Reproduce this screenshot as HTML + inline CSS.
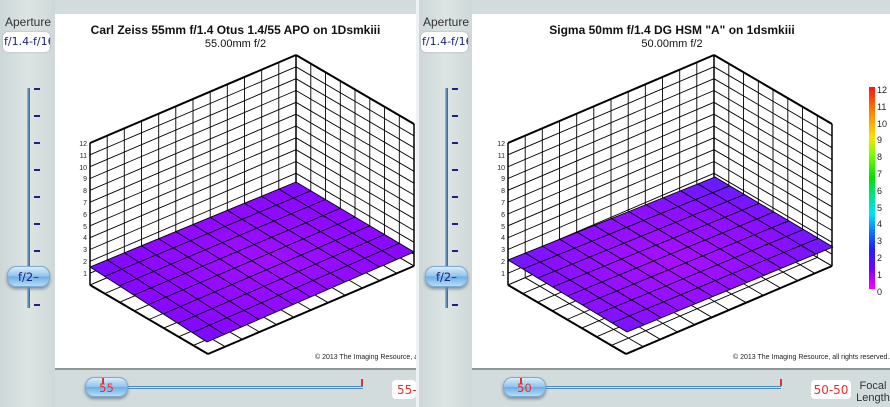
<!DOCTYPE html>
<html><head><meta charset="utf-8">
<style>
*{margin:0;padding:0;box-sizing:border-box}
body{width:890px;height:407px;overflow:hidden;background:#d3dcdc;font-family:"Liberation Sans",sans-serif;position:relative}
.abs{position:absolute}
.side{background:linear-gradient(90deg,#cdd7d7,#dde5e4 50%,#cfd8d8)}
.white{background:#fff;border-bottom:2px solid #8f9696;overflow:hidden}
.ap{font-size:12px;color:#333}
.apbox{background:#fff;border-radius:5px;font-size:11px;color:#1a237e;font-family:"DejaVu Sans",sans-serif;overflow:hidden;white-space:nowrap;padding:3px 0 0 1px;box-shadow:0 0 2px #aab}
.track{width:3px;background:linear-gradient(90deg,#8fbfe0,#2f5f8f);}
.tick{width:6px;height:2px;background:#1a237e}
.thumb{border-radius:9px;background:linear-gradient(#d9ecfb,#8ec3ec 50%,#6aaee6 51%,#b6dcf6);box-shadow:0 2px 3px #7a8a99;border:1px solid #7fa9cc;font-size:11.5px;text-align:center;font-family:"DejaVu Sans",sans-serif}
.htrack{height:3px;border-top:1px solid #4a8ac0;border-bottom:1px solid #4a8ac0;background:#cfe3f3}
.rtick{width:2px;height:7px;background:#e53030}
.vbox{background:#fff;border-radius:4px;color:#e53030;font-size:12px;font-family:"DejaVu Sans",sans-serif;padding-top:3px;text-align:center;overflow:hidden;white-space:nowrap}
.title{font-weight:bold;font-size:12px;color:#111;text-align:center;white-space:nowrap}
.sub{font-size:11px;color:#111;text-align:center;white-space:nowrap}
.copy{font-size:7px;color:#222;white-space:nowrap;position:absolute}
</style></head><body>

<div class="abs side" style="left:0;top:0;width:55px;height:407px"></div>
<div class="abs white" style="left:55px;top:14px;width:361px;height:356px"><div class="copy" style="left:260px;top:340px">© 2013 The Imaging Resource, all rights reserved.</div></div>
<div class="abs" style="left:416px;top:0;width:3px;height:407px;background:#eef2f2"></div>
<div class="abs side" style="left:419px;top:0;width:53px;height:407px"></div>
<div class="abs white" style="left:472px;top:14px;width:418px;height:356px"><div class="copy" style="left:261px;top:340px">© 2013 The Imaging Resource, all rights reserved.</div></div>

<div class="abs ap" style="left:5px;top:15px">Aperture</div>
<div class="abs apbox" style="left:3px;top:32px;width:47px;height:20px">f/1.4-f/16</div>
<div class="abs ap" style="left:423px;top:15px">Aperture</div>
<div class="abs apbox" style="left:421px;top:32px;width:47px;height:20px">f/1.4-f/16</div>

<div class="abs track" style="left:27px;top:88px;height:220px"></div>
<div class="abs track" style="left:445px;top:88px;height:220px"></div>
<div class="abs tick" style="left:34px;top:88px"></div><div class="abs tick" style="left:34px;top:115px"></div><div class="abs tick" style="left:34px;top:142px"></div><div class="abs tick" style="left:34px;top:169px"></div><div class="abs tick" style="left:34px;top:196px"></div><div class="abs tick" style="left:34px;top:223px"></div><div class="abs tick" style="left:34px;top:250px"></div><div class="abs tick" style="left:34px;top:304px"></div>
<div class="abs tick" style="left:452px;top:88px"></div><div class="abs tick" style="left:452px;top:115px"></div><div class="abs tick" style="left:452px;top:142px"></div><div class="abs tick" style="left:452px;top:169px"></div><div class="abs tick" style="left:452px;top:196px"></div><div class="abs tick" style="left:452px;top:223px"></div><div class="abs tick" style="left:452px;top:250px"></div><div class="abs tick" style="left:452px;top:304px"></div>
<div class="abs thumb" style="left:7px;top:266px;width:43px;height:21px;color:#1a237e;padding-top:3px">f/2–</div>
<div class="abs thumb" style="left:425px;top:266px;width:43px;height:21px;color:#1a237e;padding-top:3px">f/2–</div>

<div class="abs htrack" style="left:120px;top:386px;width:243px"></div>
<div class="abs rtick" style="left:361px;top:379px"></div>
<div class="abs thumb" style="left:85px;top:377px;width:43px;height:20px;color:#e53030;padding-top:3px">55</div>
<div class="abs rtick" style="left:102px;top:378px;height:6px"></div>
<div class="abs vbox" style="left:392px;top:380px;width:24px;height:19px;text-align:left;padding-left:5px">55-55</div>

<div class="abs htrack" style="left:538px;top:386px;width:243px"></div>
<div class="abs rtick" style="left:780px;top:379px"></div>
<div class="abs thumb" style="left:503px;top:377px;width:43px;height:20px;color:#e53030;padding-top:3px">50</div>
<div class="abs rtick" style="left:520px;top:378px;height:6px"></div>
<div class="abs vbox" style="left:811px;top:380px;width:40px;height:19px">50-50</div>
<div class="abs" style="left:854px;top:380px;width:38px;font-size:11px;line-height:12px;color:#333;text-align:center">Focal<br>Length</div>

<div class="abs title" style="left:55px;top:23px;width:361px">Carl Zeiss 55mm f/1.4 Otus 1.4/55 APO on 1Dsmkiii</div>
<div class="abs sub" style="left:55px;top:38px;width:361px">55.00mm f/2</div>
<div class="abs title" style="left:472px;top:23px;width:400px">Sigma 50mm f/1.4 DG HSM "A" on 1dsmkiii</div>
<div class="abs sub" style="left:472px;top:38px;width:400px">50.00mm f/2</div>

<div class="abs" style="left:869px;top:87px;width:6px;height:202px;background:linear-gradient(#ff1010,#ff8000 12%,#ffe000 25%,#80ff00 33%,#00e000 45%,#00e0a0 55%,#00e0ff 63%,#1070ff 72%,#2020ff 80%,#7000ff 90%,#ff00ff)"></div>
<div class="abs" style="left:877px;top:82px;font-size:9px;line-height:16.8px;color:#222">12<br>11<br>10<br>9<br>8<br>7<br>6<br>5<br>4<br>3<br>2<br>1<br>0</div>

<svg class="abs" style="left:0;top:0" width="890" height="407" viewBox="0 0 890 407">
<defs>
<radialGradient id="pl" cx="0.55" cy="0.5" r="0.6"><stop offset="0" stop-color="#a010ff"/><stop offset="0.7" stop-color="#8a08ff"/><stop offset="1" stop-color="#6a10ff"/></radialGradient>
<radialGradient id="pr" cx="0.5" cy="0.55" r="0.6"><stop offset="0" stop-color="#a810ff"/><stop offset="0.6" stop-color="#8a10ff"/><stop offset="1" stop-color="#5a20ff"/></radialGradient>
</defs>
<g id="charts"></g>
<g font-size="7" fill="#222" font-family="Liberation Sans" text-anchor="end">
<text x="87" y="146">12</text><text x="87" y="158">11</text><text x="87" y="170">10</text><text x="87" y="181">9</text><text x="87" y="193">8</text><text x="87" y="205">7</text><text x="87" y="217">6</text><text x="87" y="229">5</text><text x="87" y="240">4</text><text x="87" y="252">3</text><text x="87" y="264">2</text><text x="87" y="276">1</text>
<text x="505" y="146">12</text><text x="505" y="158">11</text><text x="505" y="170">10</text><text x="505" y="181">9</text><text x="505" y="193">8</text><text x="505" y="205">7</text><text x="505" y="217">6</text><text x="505" y="229">5</text><text x="505" y="240">4</text><text x="505" y="252">3</text><text x="505" y="264">2</text><text x="505" y="276">1</text>
</g>
</svg>
<script>
(function(){
var g=document.getElementById("charts"),s="";
function ln(a,b,w){s+='<line x1="'+a[0].toFixed(1)+'" y1="'+a[1].toFixed(1)+'" x2="'+b[0].toFixed(1)+'" y2="'+b[1].toFixed(1)+'" stroke="#000" stroke-width="'+(w||1)+'"/>';}
function chart(ox,S,fill){
 var L=[ox,285],K=[ox+206,197],R=[ox+324,266],B=[ox+118,354],h=142;
 function f(u,w){return [L[0]+(K[0]-L[0])*u/12+(R[0]-K[0])*w/8, L[1]+(K[1]-L[1])*u/12+(R[1]-K[1])*w/8];}
 s+='<polygon points="'+[L,K,R,B].map(p=>p.join(",")).join(" ")+'" fill="#fff"/>';
 var i;
 for(i=0;i<=12;i++){var p=f(i,0);ln(p,[p[0],p[1]-h],0.9);}
 for(i=0;i<=12;i++){ln([L[0],L[1]-h*i/12],[K[0],K[1]-h*i/12],0.9);}
 for(i=0;i<=8;i++){var p=f(12,i);ln(p,[p[0],p[1]-h],0.9);}
 for(i=0;i<=12;i++){ln([K[0],K[1]-h*i/12],[R[0],R[1]-h*i/12],0.9);}
 for(i=0;i<=12;i++){ln(f(i,0),f(i,8),0.9);}
 for(i=0;i<=8;i++){ln(f(0,i),f(12,i),0.9);}
 ln([L[0],L[1]-h],[K[0],K[1]-h],2);ln([K[0],K[1]-h],[R[0],R[1]-h],2);
 ln([K[0],K[1]-h],K,1.5);ln([L[0],L[1]-h],L,1.5);ln([R[0],R[1]-h],R,1.5);
 ln(L,B,2);ln(B,R,2);
 var SL=S[0],SK=S[1],SR=S[2],SB=S[3];
 function q(u,w){var a=u/12,b=w/8;var P=[SL[0]+(SK[0]-SL[0])*a,SL[1]+(SK[1]-SL[1])*a],Q=[SB[0]+(SR[0]-SB[0])*a,SB[1]+(SR[1]-SB[1])*a];return [P[0]+(Q[0]-P[0])*b,P[1]+(Q[1]-P[1])*b];}
 s+='<polygon points="'+[SL,SK,SR,SB].map(p=>p.join(",")).join(" ")+'" fill="url(#'+fill+')"/>';
 for(i=0;i<=12;i++){ln(q(i,0),q(i,8),0.9);}
 for(i=0;i<=8;i++){ln(q(0,i),q(12,i),0.9);}
}
chart(90,[[90,267],[296,182],[414,252],[207,342]],"pl");
chart(508,[[508,260],[715,177],[833,247],[627,332]],"pr");
g.innerHTML=s;
})();
</script>
</body></html>
